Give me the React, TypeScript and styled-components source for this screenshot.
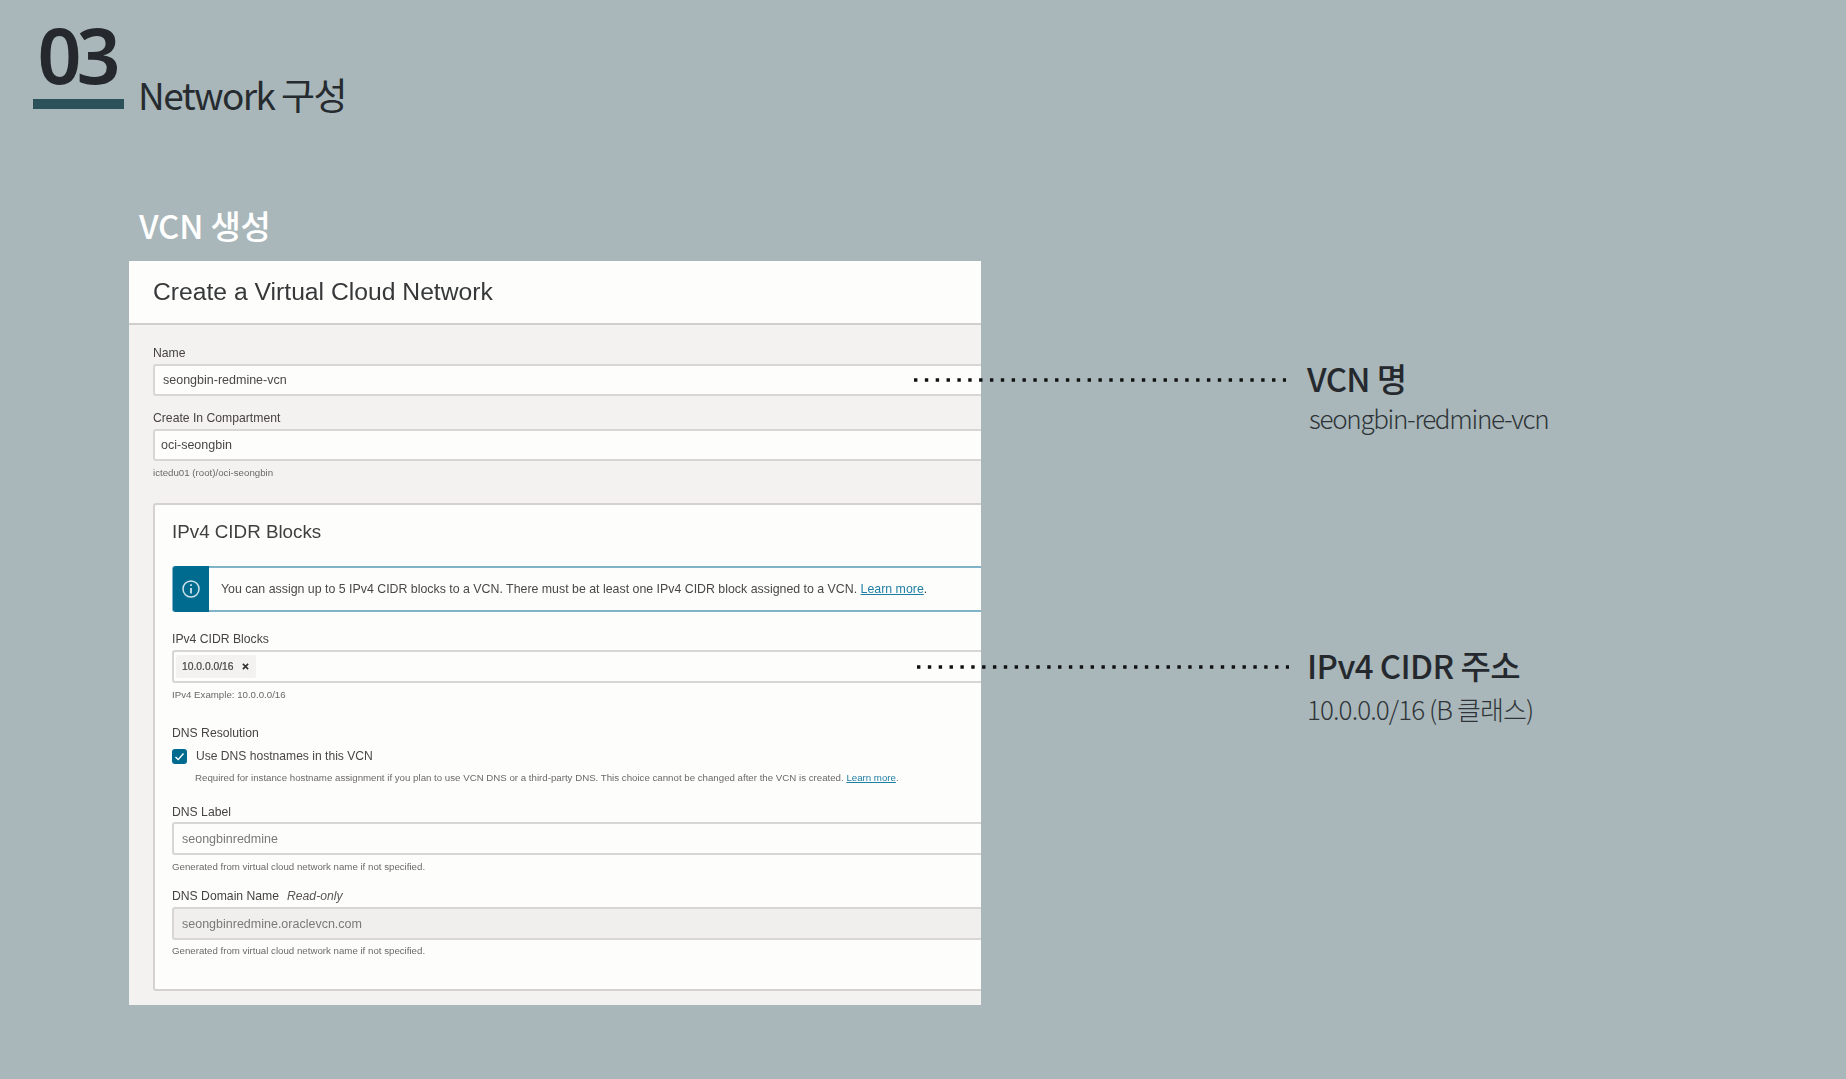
import React from "react";
import styled, { createGlobalStyle } from "styled-components";

const Global = createGlobalStyle`
  html, body { margin: 0; padding: 0; background: #a9b7ba; }
  body { font-family: "Noto Sans CJK KR", "Noto Sans", sans-serif; }
`;
const KR = `"Noto Sans CJK KR", "Noto Sans", sans-serif`;
const UI = `"Liberation Sans", Arial, sans-serif`;

const Slide = styled.div`
  width: 1846px; height: 1079px; background: #a9b7ba; overflow: hidden;
  position: relative; box-sizing: border-box; padding: 14px 0 0 33px;
`;
const Header = styled.header`display: flex; align-items: flex-start; gap: 14px; height: 106px;`;
const NumberBlock = styled.div`
  width: 91px; height: 85px; border-bottom: 10px solid #2b515b; box-sizing: content-box;
  display: flex; justify-content: center;
`;
const Num = styled.span`
  font: 600 77px/78px "Noto Sans", sans-serif; color: #25292e; letter-spacing: -5px; margin: 2px 0 0 -4px;
  white-space: nowrap;
`;
const Title = styled.h1`
  margin: 55px 0 0; font: 400 37px/50px ${KR}; color: #262b30; letter-spacing: -1.6px; white-space: nowrap;
`;
const Content = styled.main`
  display: flex; align-items: flex-start; margin: 80px 0 0 96px;
`;
const Left = styled.section`width: 852px; flex: none;`;
const SectionTitle = styled.h2`
  margin: 0 0 11px 10px; font: 500 33px/50px ${KR}; color: #fff; letter-spacing: -0.2px; white-space: nowrap;
`;
const Panel = styled.div`width: 852px; height: 744px; background: #f3f2f1; overflow: hidden; font-family: ${UI}; color: #3f3d3b; filter: blur(0.35px);`;
const PanelHead = styled.div`
  height: 62px; box-sizing: content-box; background: #fdfdfb; border-bottom: 2px solid #d2cece;
  padding-left: 24px; display: flex; align-items: center;
`;
const PanelTitle = styled.div`font-size: 24.7px; color: #36383a;`;
const PanelBody = styled.div`padding: 21px 0 0 24px; width: 900px;`;
const Label = styled.div<{ $top?: number; $gap?: number }>`
  font-size: 12.2px; line-height: 14px; color: #47443f; margin-top: ${p => p.$top ?? 0}px; margin-bottom: ${p => p.$gap ?? 4}px;
`;
const Ital = styled.i`margin-left: 8px; color: #5a5755;`;
const Input = styled.div<{ $pad?: number; $h?: number; $muted?: boolean; $disabled?: boolean }>`
  height: ${p => p.$h ?? 32}px; box-sizing: border-box; border: 2px solid #d8d6d4; border-right: none; border-radius: 3px 0 0 3px;
  background: ${p => (p.$disabled ? "#f0efee" : "#fdfdfc")};
  display: flex; align-items: center; padding-left: ${p => p.$pad ?? 8}px;
  font-size: 12.5px; color: ${p => (p.$muted ? "#7b7977" : "#4a4846")};
`;
const Help = styled.div<{ $top?: number }>`
  font-size: 9.7px; line-height: 12px; color: #6b6966; margin-top: ${p => p.$top ?? 5}px;
`;
const Card = styled.div`
  margin-top: 24px; height: 488px; box-sizing: border-box; background: #fdfdfc;
  border: 2px solid #d4d1cf; border-right: none; border-radius: 3px 0 0 3px; padding: 15px 0 0 17px;
`;
const CardTitle = styled.div`font-size: 18.8px; line-height: 24px; color: #3f3f40;`;
const Banner = styled.div`
  margin-top: 22px; height: 46px; box-sizing: border-box; display: flex; align-items: stretch;
  border: 2px solid #7fb3c8; border-right: none; border-radius: 3px 0 0 3px;
`;
const BannerIcon = styled.div`
  width: 36px; margin: -2px 0 -2px -1px; background: #006b8f; border-radius: 3px 0 0 3px;
  display: flex; align-items: center; justify-content: center;
`;
const BannerText = styled.div`
  margin-left: 12px; display: flex; align-items: center; font-size: 12.37px; color: #4a4846; white-space: pre;
`;
const Link = styled.a`color: #1f7ea3; text-decoration: underline;`;
const Chip = styled.div`
  height: 23px; width: 80px; box-sizing: border-box; background: #f3f2f1; margin-left: -3px; border-radius: 2px;
  display: flex; align-items: center; padding-left: 6px; font-size: 10.3px; color: #46443f; font-weight: 400;
  -webkit-text-stroke: 0.2px #46443f;
`;
const ChipX = styled.svg`margin-left: 8px; width: 7px; height: 7px;`;
const CheckRow = styled.div`display: flex; align-items: center; gap: 9px; margin-top: 7px; height: 18px;`;
const CheckBox = styled.div`
  width: 15px; height: 15px; border-radius: 3px; background: #006b8f; display: flex; align-items: center; justify-content: center;
`;
const CheckLabel = styled.div`font-size: 12.1px; color: #4a4846;`;
const Indented = styled.div`
  margin-left: 23px; margin-top: 7px; font-size: 9.7px; line-height: 12px; color: #6b6966; white-space: nowrap;
`;
const Right = styled.aside`padding: 155px 0 0 326px;`;
const NoteGroup = styled.div<{ $top?: number }>`margin-top: ${p => p.$top ?? 0}px;`;
const NoteTitle = styled.div`
  font: 500 33px/46px ${KR}; color: #25292e; letter-spacing: -0.6px; white-space: nowrap;
`;
const NoteText = styled.div<{ $gap: number; $ls: number; $x?: number }>`
  font: 300 26px/36px ${KR}; color: #2f3438; white-space: nowrap;
  letter-spacing: ${p => p.$ls}px; margin-top: ${p => p.$gap}px; margin-left: ${p => p.$x ?? 0}px;
`;
const Leader = styled.svg<{ $x: number; $y: number }>`
  position: absolute; left: ${p => p.$x}px; top: ${p => p.$y}px; width: 374px; height: 4px;
`;

const Dots = ({ x, y }: { x: number; y: number }) => (
  <Leader $x={x} $y={y} viewBox="0 0 374 4">
    <line x1="0" y1="2" x2="372" y2="2" stroke="#111" strokeWidth="3.4" strokeDasharray="3.4 7.45" />
  </Leader>
);

export default function App() {
  return (
    <Slide>
      <Global />
      <Header>
        <NumberBlock><Num>03</Num></NumberBlock>
        <Title>Network 구성</Title>
      </Header>
      <Content>
        <Left>
          <SectionTitle>VCN 생성</SectionTitle>
          <Panel>
            <PanelHead><PanelTitle>Create a Virtual Cloud Network</PanelTitle></PanelHead>
            <PanelBody>
              <Label>Name</Label>
              <Input $pad={8}>seongbin-redmine-vcn</Input>
              <Label $top={15}>Create In Compartment</Label>
              <Input $pad={6}>oci-seongbin</Input>
              <Help $top={6}>ictedu01 (root)/oci-seongbin</Help>
              <Card>
                <CardTitle>IPv4 CIDR Blocks</CardTitle>
                <Banner>
                  <BannerIcon>
                    <svg width="20" height="20" viewBox="0 0 20 20" fill="none" stroke="#cfe3ea" strokeWidth="1.5">
                      <circle cx="10" cy="10" r="8" />
                      <path d="M10 9v5.5" strokeWidth="1.8" />
                      <path d="M10 5.2v1.8" strokeWidth="1.8" />
                    </svg>
                  </BannerIcon>
                  <BannerText>You can assign up to 5 IPv4 CIDR blocks to a VCN. There must be at least one IPv4 CIDR block assigned to a VCN. <Link>Learn more</Link>.</BannerText>
                </Banner>
                <Label $top={20}>IPv4 CIDR Blocks</Label>
                <Input $pad={5} $h={33}>
                  <Chip>10.0.0.0/16
                    <ChipX viewBox="0 0 8 8"><path d="M1 1l6 6M7 1l-6 6" stroke="#33312e" strokeWidth="1.8" /></ChipX>
                  </Chip>
                </Input>
                <Help $top={6}>IPv4 Example: 10.0.0.0/16</Help>
                <Label $top={25}>DNS Resolution</Label>
                <CheckRow>
                  <CheckBox>
                    <svg width="11" height="11" viewBox="0 0 11 11" fill="none" stroke="#fff" strokeWidth="1.4"><path d="M1.5 6l2.7 2.6L9.5 2.5" /></svg>
                  </CheckBox>
                  <CheckLabel>Use DNS hostnames in this VCN</CheckLabel>
                </CheckRow>
                <Indented>Required for instance hostname assignment if you plan to use VCN DNS or a third-party DNS. This choice cannot be changed after the VCN is created. <Link>Learn more</Link>.</Indented>
                <Label $top={21} $gap={3}>DNS Label</Label>
                <Input $pad={8} $h={33} $muted>seongbinredmine</Input>
                <Help $top={6}>Generated from virtual cloud network name if not specified.</Help>
                <Label $top={16} $gap={4}>DNS Domain Name<Ital>Read-only</Ital></Label>
                <Input $pad={8} $h={33} $muted $disabled>seongbinredmine.oraclevcn.com</Input>
                <Help $top={5}>Generated from virtual cloud network name if not specified.</Help>
              </Card>
            </PanelBody>
          </Panel>
        </Left>
        <Right>
          <NoteGroup>
            <NoteTitle>VCN 명</NoteTitle>
            <NoteText $gap={-1.5} $ls={-1.3} $x={2}>seongbin-redmine-vcn</NoteText>
          </NoteGroup>
          <NoteGroup $top={206}>
            <NoteTitle>IPv4 CIDR 주소</NoteTitle>
            <NoteText $gap={3} $ls={-0.9}>10.0.0.0/16 (B 클래스)</NoteText>
          </NoteGroup>
        </Right>
      </Content>
      <Dots x={914} y={378} />
      <Dots x={917} y={665} />
    </Slide>
  );
}
